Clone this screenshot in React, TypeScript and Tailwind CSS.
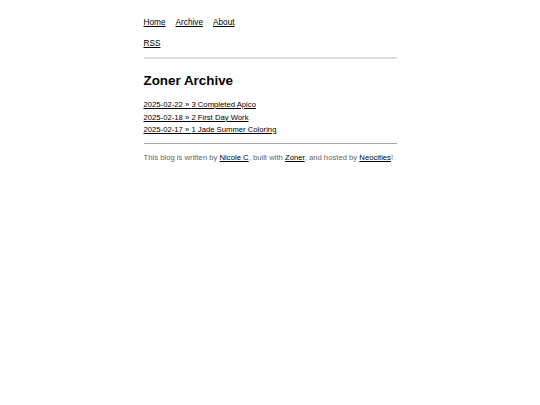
import React from 'react';

const posts = [
    { date: '2025-02-22', title: '3 Completed Apico' },
    { date: '2025-02-18', title: '2 First Day Work' },
    { date: '2025-02-17', title: '1 Jade Summer Coloring' },
];

export default function App() {
    return (
        <div className="min-h-screen bg-white text-black font-['Liberation_Sans',Arial,sans-serif]">
            <div className="mx-auto w-[253px] pt-[17px]">
                <nav className="flex gap-[10px] text-[8.25px] leading-[12px]">
                    <a href="#" className="underline">Home</a>
                    <a href="#" className="underline">Archive</a>
                    <a href="#" className="underline">About</a>
                </nav>
                <p className="mt-[9px] text-[8.25px] leading-[12px]">
                    <a href="#" className="underline">RSS</a>
                </p>
                <hr className="mt-[7px] border-0 h-[2px] bg-[#dcdcdc]" />

                <h1 className="mt-[14px] text-[13.4px] leading-[16px] font-bold">Zoner Archive</h1>
                <ul className="mt-[10px] text-[7.7px] leading-[12.5px]">
                    {posts.map((p) => (
                        <li key={p.date}>
                            <a href="#" className="underline">
                                {p.date} » {p.title}
                            </a>
                        </li>
                    ))}
                </ul>
                <hr className="mt-[6px] border-0 h-px bg-[#a8a8a8]" />

                <footer className="mt-[8px] text-[7.7px] leading-[12px] text-[#666]">
                    This blog is written by <a href="#" className="underline text-black">Nicole C</a>, built with{' '}
                    <a href="#" className="underline text-black">Zoner</a>, and hosted by{' '}
                    <a href="#" className="underline text-black">Neocities</a>!
                </footer>
            </div>
        </div>
    );
}
